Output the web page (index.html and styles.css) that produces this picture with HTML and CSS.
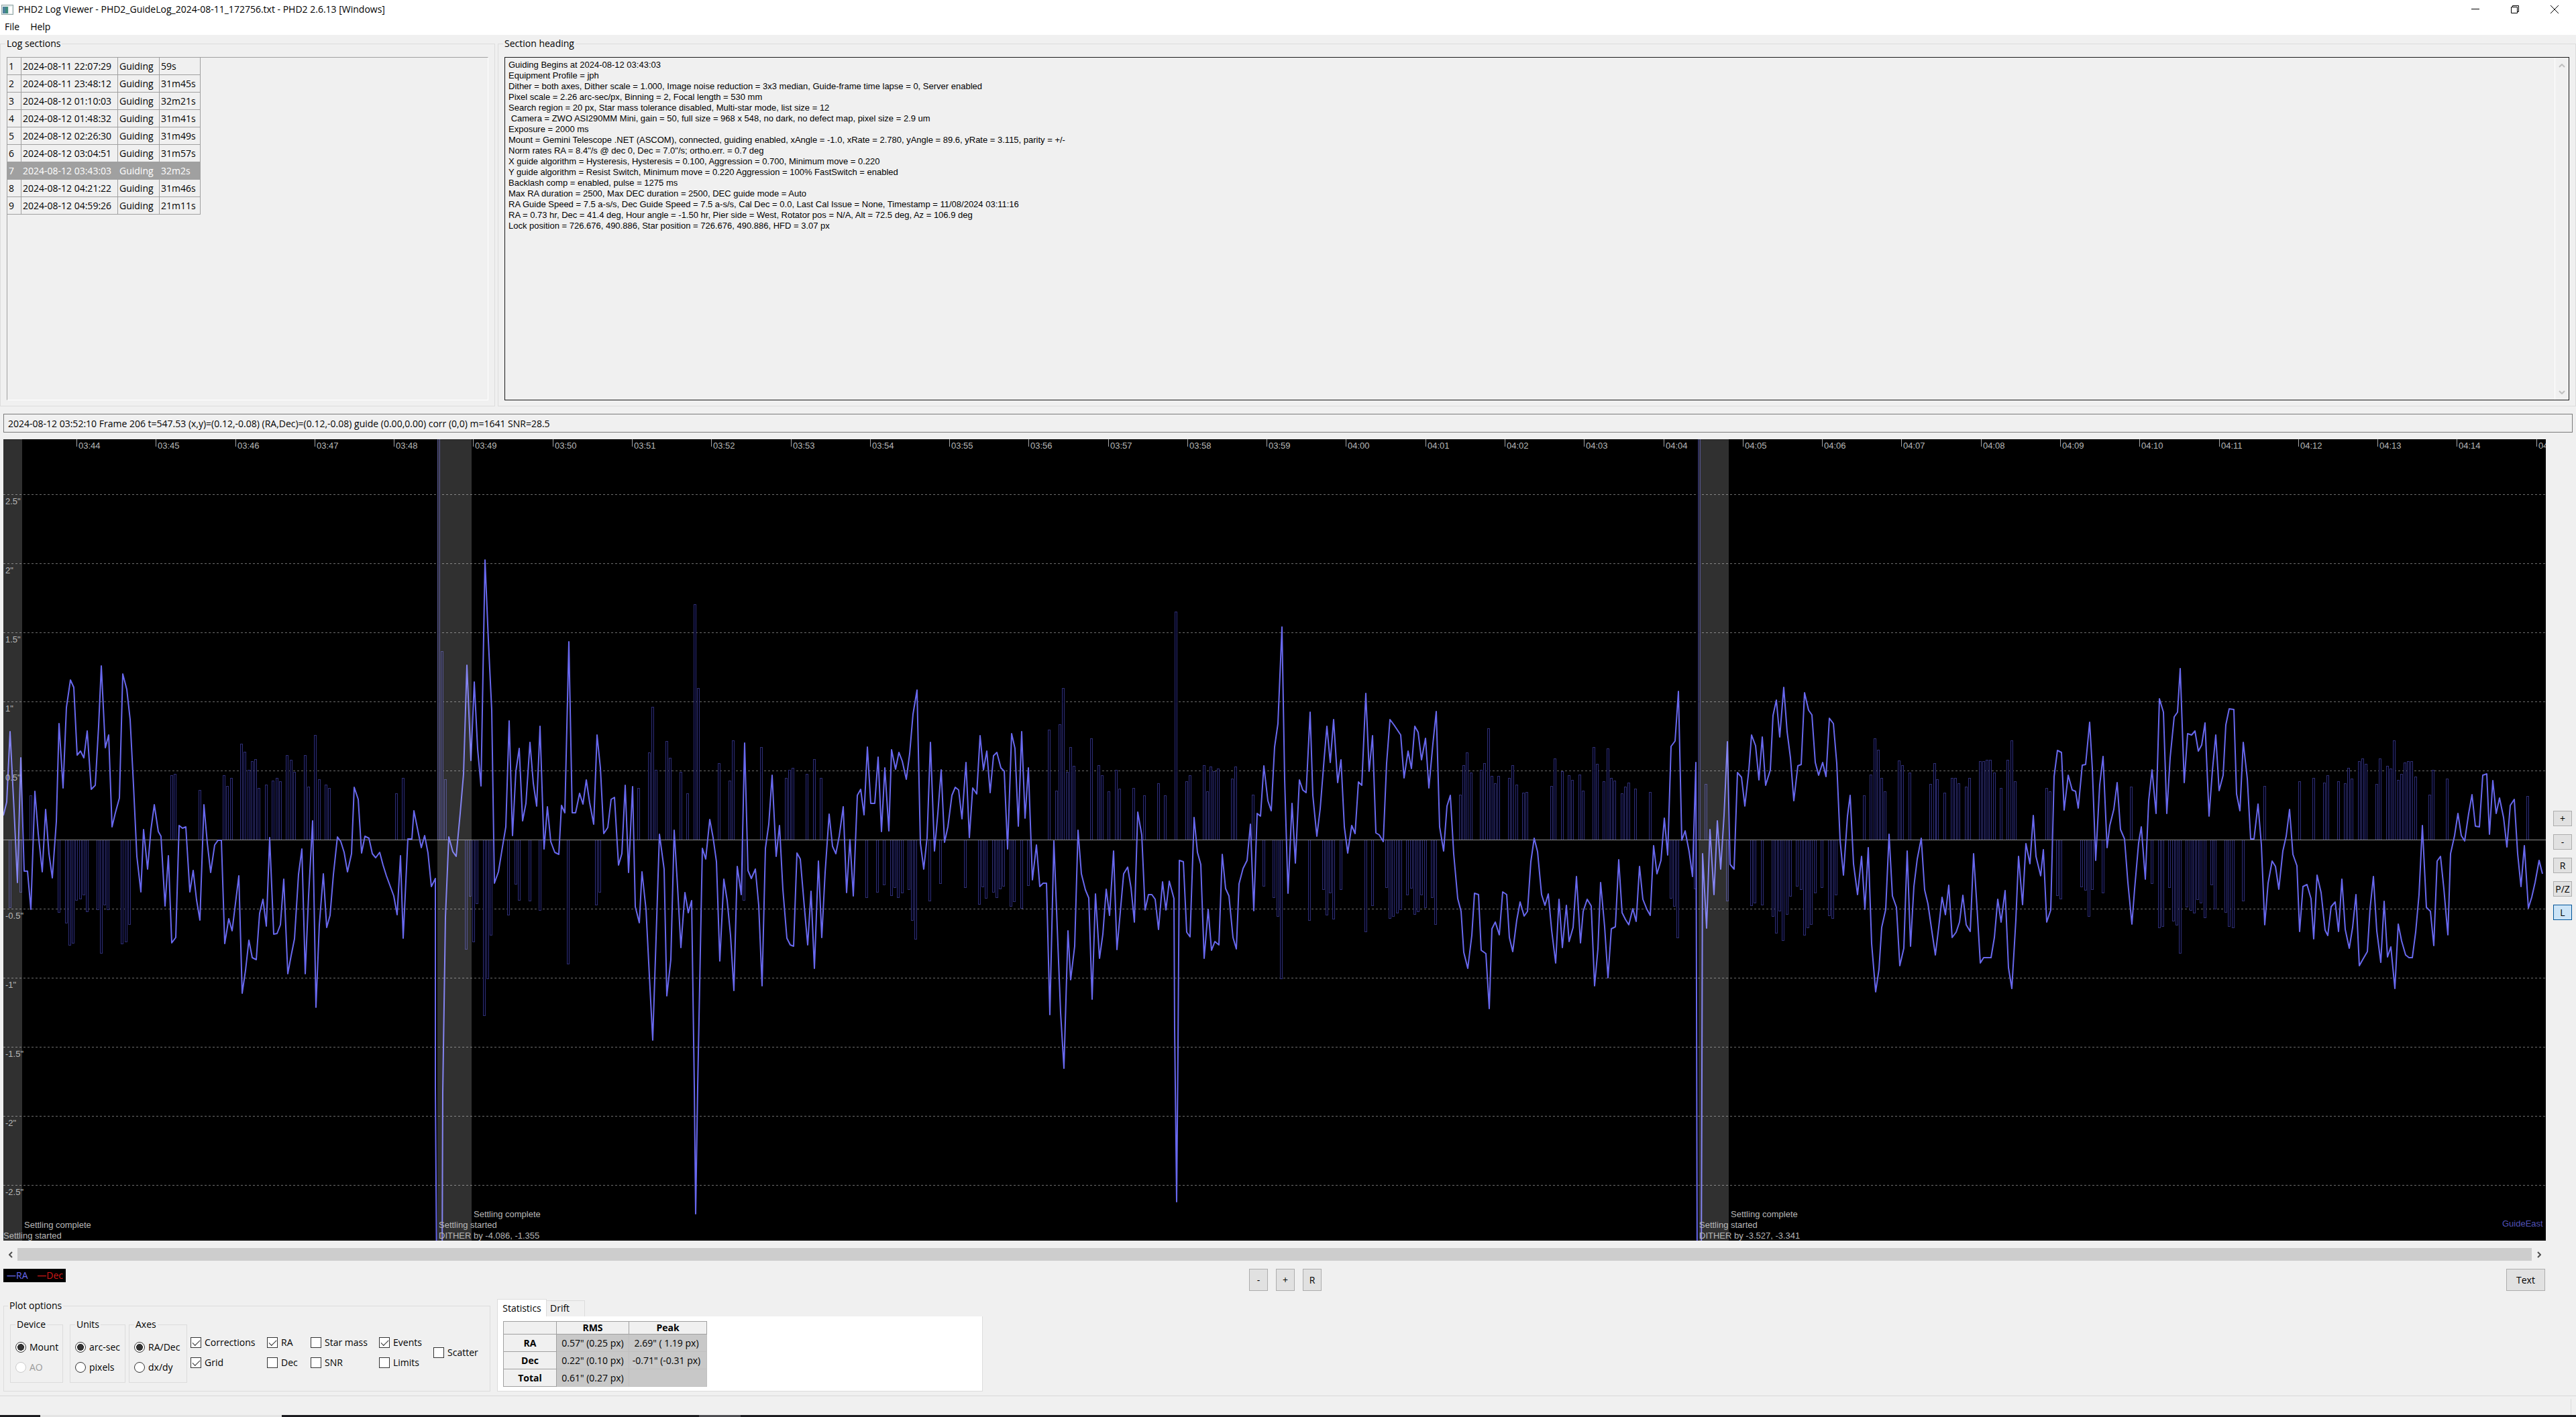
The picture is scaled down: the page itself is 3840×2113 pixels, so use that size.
FILE: index.html
```html
<!DOCTYPE html>
<html lang="en">
<head>
<meta charset="utf-8">
<title>PHD2 Log Viewer</title>
<link rel="stylesheet" href="styles.css">
</head>
<body>
<header class="titlebar">
  <svg class="app-icon" width="18" height="15" viewBox="0 0 18 15" aria-hidden="true">
    <rect x="0.5" y="0.5" width="17" height="14" fill="#e4ecec" stroke="#8fa3a3"/>
    <rect x="2" y="3" width="8" height="10" fill="#3f8c7c"/>
    <rect x="2" y="3" width="4" height="10" fill="#4c7f9c"/>
    <rect x="12" y="3" width="4" height="10" fill="#fff"/>
  </svg>
  <h1 class="window-title">PHD2 Log Viewer - PHD2_GuideLog_2024-08-11_172756.txt - PHD2 2.6.13 [Windows]</h1>
  <div class="window-buttons">
    <button type="button" aria-label="Minimize"><svg width="12" height="12" viewBox="0 0 12 12"><path d="M0 5.5h12" stroke="#000" fill="none"/></svg></button>
    <button type="button" aria-label="Restore"><svg width="12" height="12" viewBox="0 0 12 12"><path d="M0.5 2.5h9v9h-9zM2.5 2.5v-2h9v9h-2" stroke="#000" fill="none"/></svg></button>
    <button type="button" aria-label="Close"><svg width="12" height="12" viewBox="0 0 12 12"><path d="M0 0l12 12M12 0L0 12" stroke="#000" fill="none"/></svg></button>
  </div>
</header>
<nav class="menubar"><button type="button">File</button><button type="button">Help</button></nav>

<main class="client">
  <div class="top-row">
    <fieldset class="group sections">
      <legend>Log sections</legend>
      <div class="grid-frame">
        <table class="log-table">
          <tbody>
            <tr><td>1</td><td>2024-08-11 22:07:29</td><td>Guiding</td><td>59s</td></tr>
            <tr><td>2</td><td>2024-08-11 23:48:12</td><td>Guiding</td><td>31m45s</td></tr>
            <tr><td>3</td><td>2024-08-12 01:10:03</td><td>Guiding</td><td>32m21s</td></tr>
            <tr><td>4</td><td>2024-08-12 01:48:32</td><td>Guiding</td><td>31m41s</td></tr>
            <tr><td>5</td><td>2024-08-12 02:26:30</td><td>Guiding</td><td>31m49s</td></tr>
            <tr><td>6</td><td>2024-08-12 03:04:51</td><td>Guiding</td><td>31m57s</td></tr>
            <tr class="selected"><td>7</td><td>2024-08-12 03:43:03</td><td>Guiding</td><td>32m2s</td></tr>
            <tr><td>8</td><td>2024-08-12 04:21:22</td><td>Guiding</td><td>31m46s</td></tr>
            <tr><td>9</td><td>2024-08-12 04:59:26</td><td>Guiding</td><td>21m11s</td></tr>
          </tbody>
        </table>
      </div>
    </fieldset>
    <fieldset class="group heading">
      <legend>Section heading</legend>
      <div class="text-frame">
        <textarea class="heading-text" readonly aria-label="Section heading">Guiding Begins at 2024-08-12 03:43:03
Equipment Profile = jph
Dither = both axes, Dither scale = 1.000, Image noise reduction = 3x3 median, Guide-frame time lapse = 0, Server enabled
Pixel scale = 2.26 arc-sec/px, Binning = 2, Focal length = 530 mm
Search region = 20 px, Star mass tolerance disabled, Multi-star mode, list size = 12
 Camera = ZWO ASI290MM Mini, gain = 50, full size = 968 x 548, no dark, no defect map, pixel size = 2.9 um
Exposure = 2000 ms
Mount = Gemini Telescope .NET (ASCOM), connected, guiding enabled, xAngle = -1.0, xRate = 2.780, yAngle = 89.6, yRate = 3.115, parity = +/-
Norm rates RA = 8.4"/s @ dec 0, Dec = 7.0"/s; ortho.err. = 0.7 deg
X guide algorithm = Hysteresis, Hysteresis = 0.100, Aggression = 0.700, Minimum move = 0.220
Y guide algorithm = Resist Switch, Minimum move = 0.220 Aggression = 100% FastSwitch = enabled
Backlash comp = enabled, pulse = 1275 ms
Max RA duration = 2500, Max DEC duration = 2500, DEC guide mode = Auto
RA Guide Speed = 7.5 a-s/s, Dec Guide Speed = 7.5 a-s/s, Cal Dec = 0.0, Last Cal Issue = None, Timestamp = 11/08/2024 03:11:16
RA = 0.73 hr, Dec = 41.4 deg, Hour angle = -1.50 hr, Pier side = West, Rotator pos = N/A, Alt = 72.5 deg, Az = 106.9 deg
Lock position = 726.676, 490.886, Star position = 726.676, 490.886, HFD = 3.07 px</textarea>
        <div class="vscroll" aria-hidden="true">
          <svg width="10" height="6" viewBox="0 0 10 6"><path d="M1 5l4-4 4 4" stroke="#bfbfbf" stroke-width="2" fill="none"/></svg>
          <svg width="10" height="6" viewBox="0 0 10 6"><path d="M1 1l4 4 4-4" stroke="#bfbfbf" stroke-width="2" fill="none"/></svg>
        </div>
      </div>
    </fieldset>
  </div>

  <input class="frame-info" type="text" readonly aria-label="Frame info" value="2024-08-12 03:52:10 Frame 206 t=547.53 (x,y)=(0.12,-0.08) (RA,Dec)=(0.12,-0.08) guide (0.00,0.00) corr (0,0) m=1641 SNR=28.5">

  <div class="graph-row">
    <div class="graph-column">
      <svg class="graph" id="graph" viewBox="0 0 3790 1195" role="img" aria-label="RA guiding error over time"></svg>
      <div class="hscroll">
        <button type="button" aria-label="Scroll left"><svg width="6" height="10" viewBox="0 0 6 10"><path d="M5 1L1 5l4 4" stroke="#505050" stroke-width="2" fill="none"/></svg></button>
        <div class="thumb"></div>
        <button type="button" aria-label="Scroll right"><svg width="6" height="10" viewBox="0 0 6 10"><path d="M1 1l4 4-4 4" stroke="#505050" stroke-width="2" fill="none"/></svg></button>
      </div>
    </div>
    <div class="side-buttons">
      <button type="button" class="btn">+</button>
      <button type="button" class="btn">-</button>
      <button type="button" class="btn">R</button>
      <button type="button" class="btn">P/Z</button>
      <button type="button" class="btn pressed" aria-pressed="true">L</button>
    </div>
  </div>

  <div class="toolbar">
    <div class="key"><span class="key-ra">—RA</span><span class="key-dec">—Dec</span></div>
    <div class="zoom-buttons">
      <button type="button" class="btn">-</button>
      <button type="button" class="btn">+</button>
      <button type="button" class="btn">R</button>
    </div>
    <button type="button" class="btn text-button">Text</button>
  </div>

  <div class="bottom-row">
    <fieldset class="group plot-options">
      <legend>Plot options</legend>
      <div class="options">
        <fieldset class="group radios device"><legend>Device</legend>
          <label><input type="radio" name="device" checked>Mount</label>
          <label class="disabled"><input type="radio" name="device" disabled>AO</label>
        </fieldset>
        <fieldset class="group radios"><legend>Units</legend>
          <label><input type="radio" name="units" checked>arc-sec</label>
          <label><input type="radio" name="units">pixels</label>
        </fieldset>
        <fieldset class="group radios"><legend>Axes</legend>
          <label><input type="radio" name="axes" checked>RA/Dec</label>
          <label><input type="radio" name="axes">dx/dy</label>
        </fieldset>
        <div class="checks">
          <label><input type="checkbox" checked>Corrections</label>
          <label><input type="checkbox" checked>Grid</label>
        </div>
        <div class="checks">
          <label><input type="checkbox" checked>RA</label>
          <label><input type="checkbox">Dec</label>
        </div>
        <div class="checks">
          <label><input type="checkbox">Star mass</label>
          <label><input type="checkbox">SNR</label>
        </div>
        <div class="checks">
          <label><input type="checkbox" checked>Events</label>
          <label><input type="checkbox">Limits</label>
        </div>
        <div class="checks">
          <label><input type="checkbox">Scatter</label>
        </div>
      </div>
    </fieldset>
    <section class="stats">
      <div class="tabs" role="tablist">
        <button type="button" role="tab" class="tab active" aria-selected="true">Statistics</button>
        <button type="button" role="tab" class="tab" aria-selected="false">Drift</button>
      </div>
      <div class="tab-page">
        <table class="stats-table">
          <thead><tr><th></th><th>RMS</th><th>Peak</th></tr></thead>
          <tbody>
            <tr><th>RA</th><td>0.57" (0.25 px)</td><td>2.69" ( 1.19 px)</td></tr>
            <tr><th>Dec</th><td>0.22" (0.10 px)</td><td>-0.71" (-0.31 px)</td></tr>
            <tr><th>Total</th><td>0.61" (0.27 px)</td><td></td></tr>
          </tbody>
        </table>
      </div>
    </section>
  </div>
</main>
<footer class="statusbar"><span class="grip"></span></footer>
<div class="taskbar-edge"><span class="task-open"></span><span class="task-idle"></span></div>
<script src="graph.js"></script>
</body>
</html>
```
FILE: styles.css
```css
* { box-sizing: border-box; }
body {
  margin: 0;
  min-height: 100vh;
  display: flex;
  flex-direction: column;
  background: #f0f0f0;
  color: #000;
  font: 14px/20px "Open Sans", "Noto Sans", sans-serif;
}
button, input, textarea { font: inherit; color: inherit; margin: 0; }

.titlebar { display: flex; align-items: center; gap: 7px; height: 28px; padding: 0 3px 0 2px; background: #fff; }
.window-title { flex: 1; margin: 0; font-size: 14px; font-weight: 400; }
.window-buttons { display: flex; }
.window-buttons button { display: flex; justify-content: center; align-items: center; width: 59px; height: 28px; padding: 0; border: 0; background: none; }
.menubar { display: flex; gap: 16px; height: 24px; padding: 2px 7px; background: #fff; }
.menubar button { padding: 0; border: 0; background: none; line-height: 20px; }

.client { flex: 1; padding-top: 3px; }
.group { min-width: 0; margin: 0; border: 1px solid #dcdcdc; padding: 8px 9px; }
.group > legend { margin-left: -2px; padding: 0 2px; }

.top-row { display: flex; gap: 4px; height: 551px; }
.sections { flex: 0 0 738px; padding-top: 10px; }
.heading { flex: 1; padding-top: 10px; }
.grid-frame { height: 512px; border: 1px solid; border-color: #a0a0a0 #fff #fff #a0a0a0; }
.log-table { border-collapse: collapse; table-layout: fixed; width: 289px; margin: -1px 0 0 -1px; }
.log-table td { height: 26px; padding: 0 2px; border: 1px solid #a0a0a0; white-space: nowrap; line-height: 20px; }
.log-table td:nth-child(1) { width: 21px; }
.log-table td:nth-child(2) { width: 144px; }
.log-table td:nth-child(3) { width: 62px; }
.log-table td:nth-child(4) { width: 61px; }
.log-table .selected td { background: #a0a0a0; color: #fff; }
.text-frame { display: flex; height: 512px; border: 1px solid #1a1a1a; }
.heading-text { flex: 1; padding: 3px 5px; border: 0; resize: none; outline: 0; background: transparent; overflow: hidden; font: 13px/16px "Liberation Sans", Arial, sans-serif; }
.vscroll { display: flex; flex-direction: column; justify-content: space-between; align-items: center; width: 21px; padding: 9px 0 8px; border-left: 1px solid #fff; }

.frame-info { display: block; width: calc(100% - 10px); height: 28px; margin: 11px 5px 10px; padding: 0 6px; border: 1px solid #7a7a7a; background: #f0f0f0; }

.graph-row { display: flex; padding-left: 5px; }
.graph-column { flex: 1; min-width: 0; }
.graph { display: block; width: 100%; height: auto; background: #000; }
.graph text { font: 13px "Liberation Sans", Arial, sans-serif; fill: #b8b8b8; }
.graph .east { fill: #5252b8; }
.graph .grid { stroke: #6c6c6c; stroke-dasharray: 3 3; }
.graph .zero { stroke: #8c8c8c; }
.graph .tick { stroke: #a8a8a8; }
.graph .pulse { fill: #000014; stroke: #2e2e72; shape-rendering: crispEdges; }
.graph .trace { fill: none; stroke: #6868ee; stroke-width: 2; stroke-linejoin: round; }
.graph .settling { fill: #fff; fill-opacity: 0.19; }
.hscroll { display: flex; height: 19px; margin-top: 11px; }
.hscroll button { display: flex; justify-content: center; align-items: center; width: 21px; padding: 0; border: 0; background: none; }
.thumb { flex: 1; background: #cdcdcd; }
.side-buttons { display: flex; flex-direction: column; gap: 12px; width: 45px; padding: 554px 6px 0 11px; }
.btn { width: 28px; height: 33px; padding: 0; border: 1px solid #adadad; background: #e1e1e1; text-align: center; }
.side-buttons .btn { height: 23px; line-height: 20px; }
.btn.pressed { border-color: #005499; background: #cce4f7; }

.toolbar { display: grid; grid-template-columns: 1fr auto 1fr; align-items: start; padding: 12px 13px 0 5px; }
.key { justify-self: start; display: flex; justify-content: space-between; width: 93px; height: 20px; padding: 0 4px 0 5px; background: #000; }
.key-ra { color: #6868ee; }
.key-dec { color: #d01818; }
.zoom-buttons { display: flex; gap: 12px; }
.text-button { justify-self: end; width: 58px; margin-right: 33px; }

.bottom-row { display: flex; gap: 10px; padding: 12px 5px 6px; }
.plot-options { flex: 0 0 726px; height: 138px; padding-bottom: 0; }
.plot-options > legend { margin-left: -3px; }
.options { display: grid; grid-template-columns: 89px 88px 92px 114px 65px 102px 81px auto; }
.radios { display: flex; flex-direction: column; gap: 10px; height: 97px; margin-right: 5px; padding: 14px 0 0 7px; }
.radios > legend { margin-left: 0; }
.device { margin-right: 10px; }
.options label { display: flex; align-items: center; gap: 5px; height: 20px; white-space: nowrap; }
.options .disabled { color: #9a9a9a; }
.checks { display: flex; flex-direction: column; gap: 10px; padding-top: 27px; }
.checks:last-child { padding-top: 42px; }
.options input { appearance: none; flex: none; width: 16px; height: 16px; border: 1px solid #333; background: #fff; }
.options input[type=radio] { border-radius: 50%; }
.options input[type=radio]:checked { background: radial-gradient(circle, #333 0 5px, #fff 5px); }
.options input:disabled { border-color: #ccc; }
.options input[type=checkbox]:checked { display: grid; place-items: center; }
.options input[type=checkbox]:checked::before { content: ""; width: 10px; height: 5px; margin-bottom: 3px; border: solid #333; border-width: 0 0 1px 1px; transform: rotate(-45deg); }

.stats { flex: 0 0 724px; }
.tabs { display: flex; align-items: flex-end; height: 26px; }
.tab { height: 24px; width: 57px; padding: 0 0 2px 5px; border: 1px solid #dcdcdc; border-width: 1px 1px 0 0; background: #f0f0f0; text-align: left; line-height: 20px; }
.tab.active { width: 74px; height: 26px; padding: 0; border-left-width: 1px; background: #fff; text-align: center; }
.tab-page { height: 112px; padding: 7px 8px; border: 1px solid #dcdcdc; border-top: 0; background: #fff; }
.stats-table { border-collapse: collapse; table-layout: fixed; width: 304px; }
.stats-table th, .stats-table td { height: 26px; padding: 0; border: 1px solid #a0a0a0; line-height: 18px; white-space: nowrap; }
.stats-table thead th { height: 19px; }
.stats-table th { background: #f0f0f0; font-weight: 700; }
.stats-table th:nth-child(1) { width: 79px; }
.stats-table th:nth-child(2) { width: 108px; }
.stats-table td { background: #c8c8c8; border-color: #c0c0c0; text-align: center; }
.stats-table td:last-child { padding-right: 4px; }

.statusbar { display: flex; justify-content: flex-end; height: 29px; padding: 4px 7px 0; border-top: 1px solid #d7d7d7; }
.grip { width: 1px; background: #dcdcdc; }
.taskbar-edge { display: flex; height: 3px; padding-left: 60px; background: #1b1b1f; }
.task-open { width: 360px; background: #e4e4e4; }
.task-idle { width: 62px; margin-left: 622px; background: #4c4c50; }
```
FILE: graph.js
```js
// Guide log samples. Each block holds "t,v" pairs in log units, with the block's
// left edge in graph pixels. v = 774 is zero error; 260.5 units are one arc-second.
const UNIT_X = 0.63776, UNIT_Y = 0.79082, TOP = 15;
const WIDTH = 3790, HEIGHT = 1195;

const blocks = [
  { left: -5,
    trace: `8,728 16,703 24,570 33,720 40,855 48,619 57,833 65,833 72,906 82,683 90,762 98,834 106,717 115,800 123,846 131,740 138,555 147,676 156,525 164,473 172,487 180,614 188,607 196,619 204,569 213,679 222,671 230,560 237,447 246,601 254,576 262,750 270,723 279,696 287,461 296,490 304,547 312,672 320,805 329,873 336,755 345,829 353,755 361,708 370,759 377,768 386,899 394,804 402,968 411,958 418,747 427,752 435,750 443,873 451,832 460,888 468,926 476,708 484,780 492,836 501,784 509,775 517,775 525,970 534,923 542,946 558,842 566,1063 574,1020 582,963 590,996 599,1000 607,913 615,887 623,937 631,770 640,952 648,951 656,934 664,849 673,1027 681,993 689,961 697,840 705,791 714,1027 722,880 730,739 738,1090 747,934 755,839 763,940 771,917 779,840 788,769 796,778 804,798 813,835 821,800 828,675 837,698 845,799 853,767 862,771 870,800 878,808 887,798 895,822 903,842 920,880 928,915 936,804 943,960 953,773 962,773 968,720 977,757 985,789 993,766 1001,799 1009,862 1017,847 1018,1240 1020,1600 1033,1600 1035,1250 1041,920 1049,769 1058,797 1067,806 1075,725 1083,650 1091,445 1100,625 1108,477 1116,603 1124,673 1133,247 1141,398 1149,530 1156,856 1165,834 1174,788 1182,750 1190,550 1198,766 1206,645 1214,602 1222,739 1230,706 1239,590 1247,668 1255,711 1263,560 1272,792 1280,712 1288,778 1297,798 1306,802 1313,710 1321,723 1329,401 1337,723 1346,723 1354,686 1362,707 1370,661 1379,704 1387,745 1395,577 1403,638 1411,763 1420,751 1428,698 1436,694 1445,822 1453,800 1461,671 1469,836 1478,674 1485,900 1494,931 1501,834 1510,905 1518,1030 1526,1152 1534,960 1542,764 1552,830`,
    pulses: `72,691 401,653 409,650 467,680 524,652 532,673 541,658 564,593 573,608 582,643 589,626 598,622 606,676 622,670 638,663 647,657 655,664 671,615 680,624 688,646 713,615 721,674 737,576 746,660 762,670 770,676 927,686 942,658 1025,0 1033,418 1041,660 1493,676 24,902 48,872 138,911 155,931 163,973 171,969 179,888 188,885 196,878 204,909 229,906 237,988 245,896 253,906 285,970 294,966 303,933 1090,980 1099,880 1107,966 1115,894 1132,1105 1140,1036 1148,954 1188,915 1206,857 1214,888 1239,889 1262,907 1328,1008 1394,896 1402,872` },
  { left: 955,
    trace: `54,1069 62,1000 70,756 78,862 87,977 95,874 103,912 112,889 117,1240 120,1479 126,1240 136,790 144,811 153,736 161,770 169,815 177,1003 186,848 194,889 202,955 210,1058 218,824 227,878 235,592 243,832 251,847 260,829 268,898 276,1049 284,790 292,745 300,652 309,806 317,747 325,868 334,960 342,972 350,975 358,799 366,811 375,900 382,972 391,871 399,1017 407,814 415,958 423,836 432,726 440,786 448,801 456,768 465,712 473,874 481,774 489,880 498,691 506,679 514,727 522,599 530,706 539,706 547,618 555,759 563,638 572,757 579,604 588,641 596,609 604,626 613,660 621,612 629,538 638,492 646,780 654,829 662,770 669,590 679,796 686,725 694,642 702,779 711,750 719,690 727,675 735,680 744,735 752,629 760,770 768,676 777,688 785,578 793,643 801,607 809,685 817,616 825,610 834,638 842,645 850,792 859,574 867,602 875,748 883,570 891,733 899,638 908,850 917,784 925,862 933,856 941,856 949,1104 958,776 966,940 974,1100 981,1205 991,946 998,1038 1006,975 1014,756 1023,838 1032,869 1039,884 1047,1075 1056,876 1064,998 1072,952 1080,867 1088,917 1097,796 1105,981 1113,910 1121,839 1130,826 1138,865 1146,930 1154,722 1163,765 1171,907 1179,878 1187,877 1195,886 1203,943 1212,853 1220,907 1227,852 1238,885 1240,1130 1245,1457 1248,1170 1252,813 1260,815 1269,949 1277,957 1285,732 1293,798 1302,821 1310,998 1318,905 1326,982 1335,966 1343,972 1351,802 1359,866 1367,880 1376,958 1384,980 1391,857 1400,828 1409,813 1417,745 1425,908 1433,725 1441,729 1449,635 1458,701 1466,720 1474,600 1482,555 1491,373 1498,660 1506,875 1515,705 1523,818 1532,661 1540,680 1548,685`,
    pulses: `12,610 20,524 28,642 53,588 61,619 86,646 102,687 119,330 127,488 175,630 200,663 208,587 274,600 332,658 340,643 348,638 381,650 398,622 414,658 947,566 964,681 972,556 980,488 989,646 997,600 1005,635 1046,583 1063,633 1071,653 1087,683 1104,643 1112,678 1145,676 1170,690 1203,668 1218,690 1244,344 1268,664 1276,652 1309,633 1317,683 1325,636 1333,645 1342,640 1375,659 1383,636 1424,689 234,888 520,883 546,872 561,858 578,879 587,864 594,883 603,874 619,868 627,926 635,961 668,889 693,856 751,864 784,895 792,863 800,884 817,873 825,883 833,866 841,861 858,899 866,890 883,903 899,860 1449,861 1472,883 1482,918 1490,1036 1555,926` },
  { left: 1915,
    trace: `51,534 58,690 67,767 76,716 84,620 91,560 99,629 107,547 116,666 124,624 132,750 140,799 149,747 157,762 165,665 173,671 182,498 190,645 198,578 206,761 214,765 223,778 231,630 239,547 247,558 264,577 272,657 280,607 289,640 297,560 304,571 312,624 322,583 330,677 338,593 346,532 355,750 363,795 371,711 379,690 387,800 396,885 404,909 411,986 420,1017 429,955 436,875 445,878 452,983 462,989 470,1092 477,942 485,930 494,953 502,873 511,878 518,958 526,985 535,925 543,892 552,918 559,909 568,815 576,771 584,797 592,877 601,898 609,876 617,945 625,1006 634,887 642,978 650,898 657,966 666,939 675,844 683,969 690,909 699,886 708,899 716,1049 724,980 731,855 740,938 748,1035 756,942 765,938 773,812 781,912 789,924 797,934 806,904 814,928 822,824 830,887 839,905 847,917 855,785 863,839 872,813 880,734 888,803 896,598 904,588 913,494 921,775 929,758 937,797 945,844 953,628 955,1074 957,1600 966,1600 968,1212 969,800 978,941 987,755 995,878 1003,738 1011,830 1019,728 1027,589 1034,821 1043,829 1051,648 1060,656 1068,711 1077,643 1084,576 1093,597 1101,661 1109,580 1117,672 1127,643 1134,540 1142,511 1150,580 1159,487 1167,570 1175,620 1183,700 1191,635 1200,632 1208,497 1216,530 1224,539 1232,629 1241,653 1249,628 1257,655 1266,545 1274,555 1282,630 1291,775 1299,841 1307,730 1314,690 1322,820 1331,877 1340,805 1348,905 1356,789 1364,970 1373,1061 1381,1018 1388,940 1397,906 1405,764 1413,880 1422,902 1430,1012 1439,979`,
    pulses: `403,689 411,633 419,610 428,648 451,643 459,630 469,564 477,654 484,668 492,654 517,658 525,633 534,670 550,685 558,684 616,673 624,621 641,645 657,653 665,661 682,651 690,681 715,600 723,631 739,664 748,602 756,657 763,663 781,687 788,674 796,667 813,678 847,684 961,0 977,669 1347,691 1362,651 1372,583 1380,605 1388,657 1396,683 1428,625 1436,633 83,868 91,916 99,874 107,923 124,868 182,947 197,898 230,864 238,922 246,918 255,912 263,906 279,878 289,865 296,914 304,909 312,878 321,901 337,883 345,933 895,884 903,899 911,959 952,866 1027,889 1083,898 1092,893 1109,896 1133,918 1141,950 1149,908 1157,964 1166,914 1174,880 1190,861 1199,868 1207,954 1215,939 1223,933 1232,874 1248,864 1265,917 1273,922 1281,878` },
  { left: 2835,
    trace: `4,795 12,975 20,862 29,810 37,771 45,869 53,895 61,940 70,992 78,940 86,882 94,915 102,860 110,959 119,949 127,930 135,879 143,934 152,947 160,801 168,900 176,1007 184,996 200,997 209,958 217,887 225,930 233,870 242,1016 250,1054 258,925 265,805 275,896 283,782 291,820 299,728 306,806 316,842 323,793 331,929 340,907 348,655 356,606 365,610 372,718 381,652 390,680 398,683 405,715 414,633 422,632 431,552 438,640 446,813 455,670 463,617 472,789 479,747 488,717 496,667 504,755 512,773 521,855 530,933 537,868 545,780 552,750 562,849 569,700 577,642 586,724 595,508 603,534 611,725 619,620 628,542 636,533 643,451 652,666 660,574 669,576 677,569 685,607 693,595 701,554 710,730 718,644 726,577 734,681 743,653 750,558 758,527 768,528 775,688 783,720 791,590 800,659 808,772 816,773 824,707 832,784 841,935 849,856 857,814 865,824 874,868 882,796 890,768 898,717 907,802 915,823 922,947 930,863 939,858 948,885 955,961 963,841 972,874 981,944 988,955 996,900 1005,892 1013,947 1021,849 1029,943 1038,979 1046,940 1054,878 1062,1012 1070,1000 1080,985 1087,904 1095,843 1103,946 1112,1005 1120,890 1128,995 1136,976 1144,1055 1153,933 1161,965 1169,992 1177,996 1186,996 1193,949 1201,878 1209,747 1219,902 1227,909 1235,974 1243,814 1251,805 1259,866 1268,954 1275,801 1284,766 1292,724 1300,766 1308,777 1317,725 1325,689 1333,749 1342,750 1350,653 1359,650 1366,764 1374,662 1382,724 1390,696 1398,732 1407,788 1415,709 1423,698 1432,800 1440,863 1448,785 1456,903 1465,883 1473,855 1481,813 1489,839`,
    pulses: `11,648 59,669 69,630 76,660 92,685 110,658 117,657 125,668 143,674 150,658 176,626 183,626 191,624 199,624 209,648 224,676 240,624 249,587 257,664 331,676 339,683 528,674 840,673 922,664 955,657 980,667 988,653 1013,664 1028,668 1036,638 1044,659 1061,626 1069,621 1077,631 1102,669 1110,621 1127,635 1135,640 1143,587 1152,661 1160,650 1168,629 1176,626 1184,626 1193,655 1226,689 1234,642 1267,659 1455,692 356,879 364,885 412,863 422,869 430,918 437,867 462,874 577,856 594,940 602,937 618,864 627,927 635,935 643,988 659,900 668,907 676,912 684,886 692,893 701,921 717,858 725,904 750,911 757,937 767,940 790,889` }
];

const toY = v => Math.round(v * UNIT_Y - TOP);
const pairs = block => key => block[key].trim().split(/\s+/).map(p => {
  const [t, v] = p.split(",").map(Number);
  return [Math.round(t * UNIT_X + block.left), toY(v)];
});
const ZERO = toY(774);
const parts = [];
const hline = (cls, y) => parts.push(`<line class="${cls}" x1="0" x2="${WIDTH}" y1="${y + 0.5}" y2="${y + 0.5}"/>`);
const label = (x, y, s, cls = "") => parts.push(`<text class="${cls}" x="${x}" y="${y}">${s}</text>`);

for (let i = -5; i <= 5; i++) if (i) hline("grid", ZERO - i * 103);

for (const b of blocks) for (const [x, y] of pairs(b)("pulses")) {
  const top = Math.min(y, ZERO);
  parts.push(`<rect class="pulse" x="${x - 1.5}" y="${top + 0.5}" width="3" height="${Math.abs(y - ZERO)}"/>`);
}
hline("zero", ZERO);

const points = blocks.flatMap(b => pairs(b)("trace"));
parts.push(`<polyline class="trace" points="${points.join(" ")}"/>`);

for (const [x, w] of [[0, 28], [647, 51], [2527, 45]])
  parts.push(`<rect class="settling" x="${x}" y="0" width="${w}" height="${HEIGHT}"/>`);

// One tick a minute, from 03:44
for (let i = 0; i <= 31; i++) {
  const x = Math.round(110 + i * 118.28), m = 224 + i;
  parts.push(`<line class="tick" x1="${x - 0.5}" x2="${x - 0.5}" y1="0" y2="11"/>`);
  label(x + 2, 14, `0${Math.floor(m / 60)}:${String(m % 60).padStart(2, "0")}`);
}
for (let i = -5; i <= 5; i++) if (i) label(3, ZERO - i * 103 + 15, `${i / 2}"`);

label(0, 1192, "Settling started");
label(31, 1176, "Settling complete");
label(649, 1192, "DITHER by -4.086, -1.355");
label(649, 1176, "Settling started");
label(701, 1160, "Settling complete");
label(2528, 1192, "DITHER by -3.527, -3.341");
label(2528, 1176, "Settling started");
label(2575, 1160, "Settling complete");
label(3725, 1174, "GuideEast", "east");

document.getElementById("graph").innerHTML = parts.join("");
```
